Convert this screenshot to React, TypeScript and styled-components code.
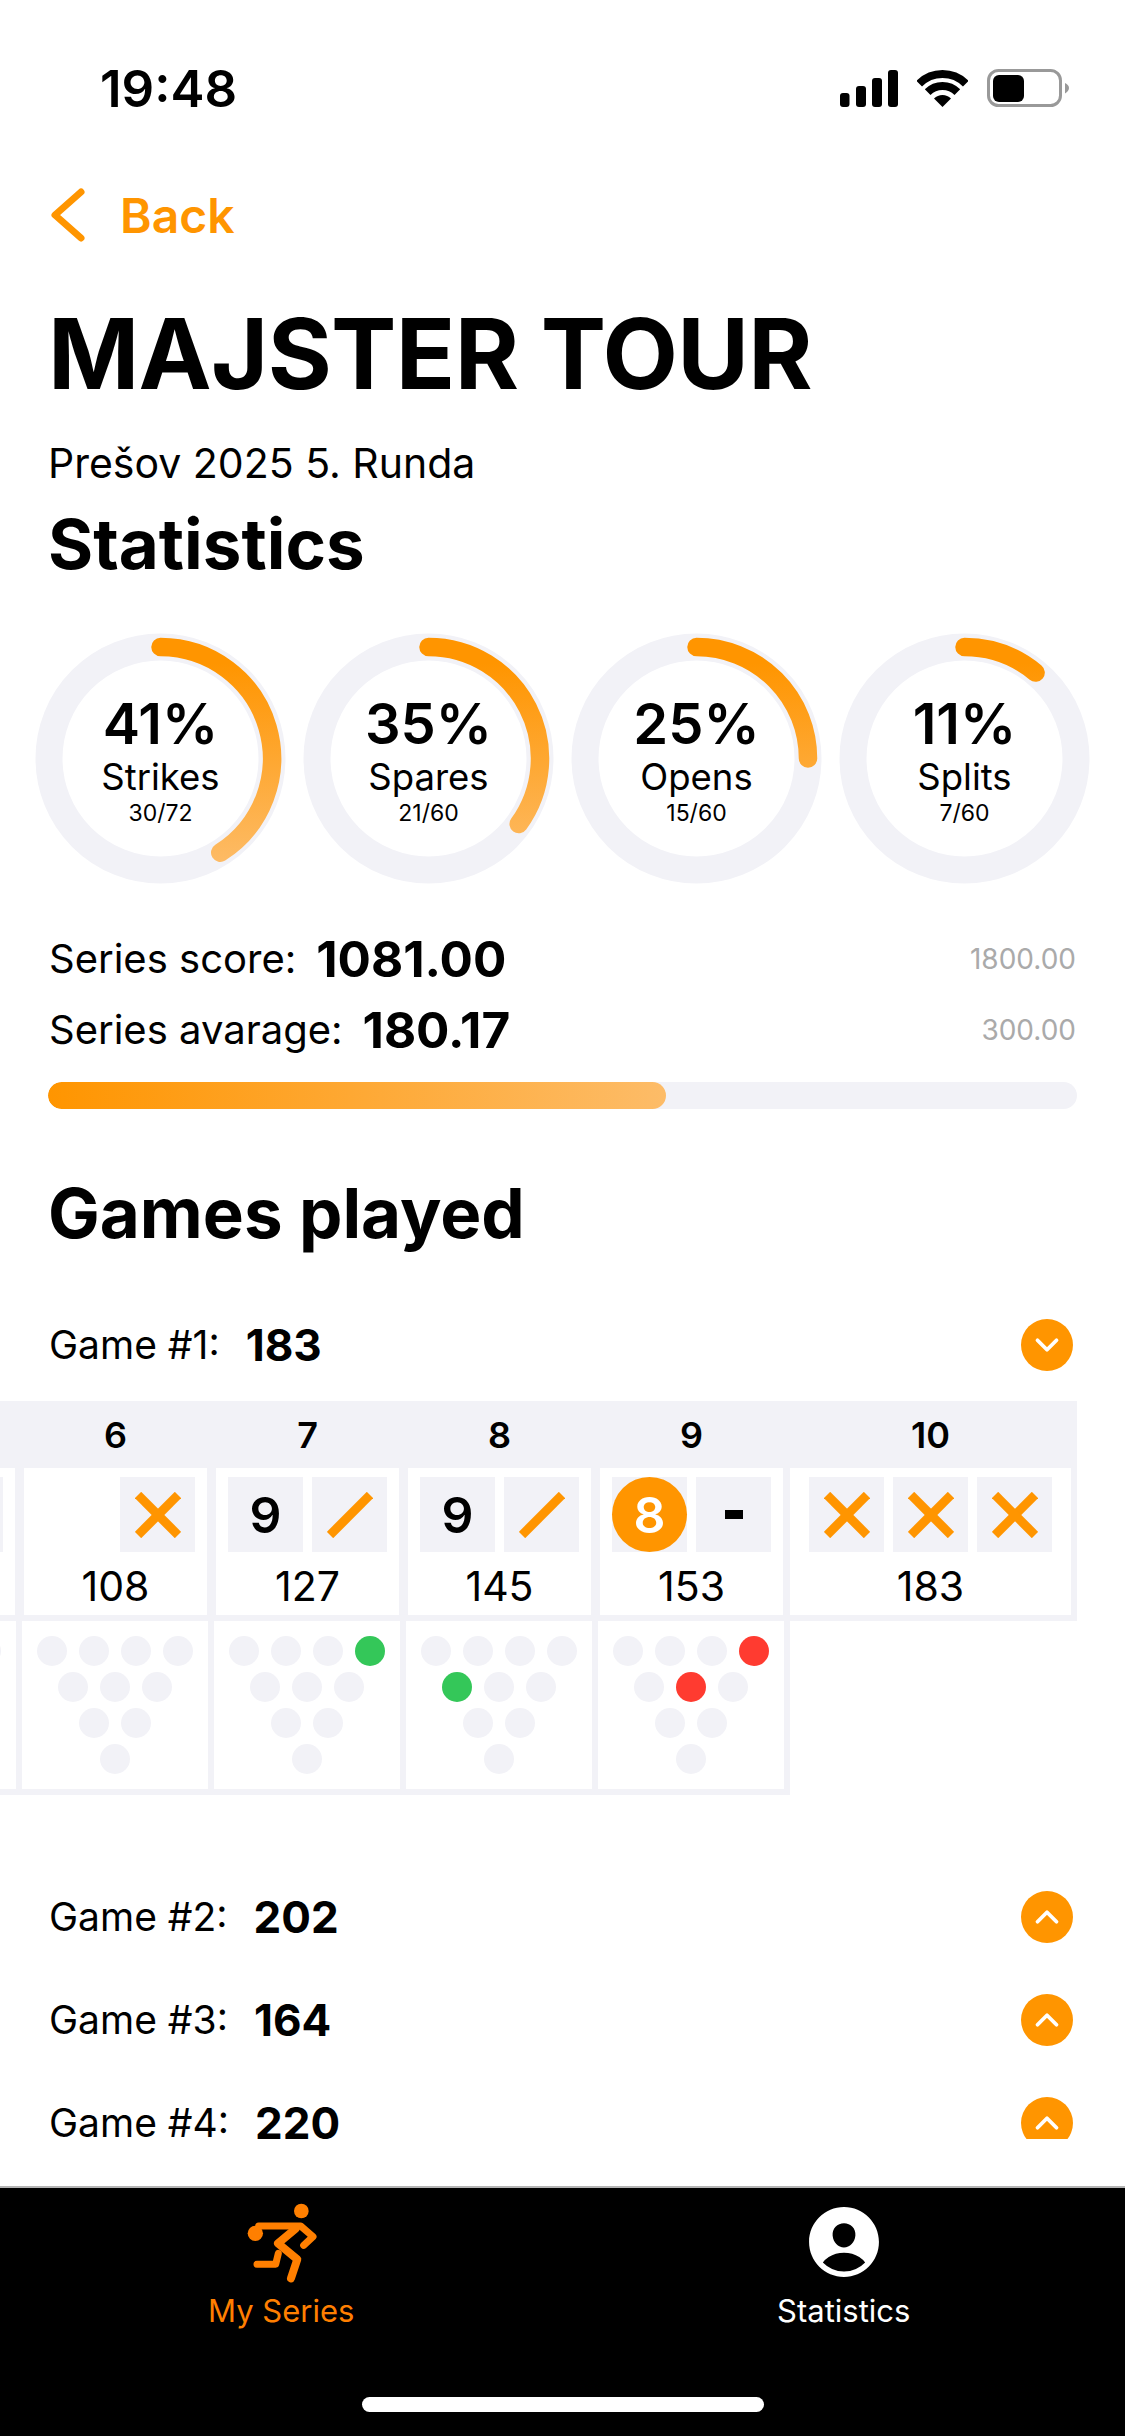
import React from 'react';
import styled, { createGlobalStyle } from 'styled-components';
import { ChevronDown, ChevronUp } from 'lucide-react';
import { IoPersonCircle } from 'react-icons/io5';

const ORANGE = '#FF9500';
const GREY = '#F2F2F7';

type Mark = 'none' | 'x' | 'slash' | 'dash' | 'badge' | number;

type Frame = {
  no: string;
  marks: Mark[];
  score: string;
  wide?: boolean;
  pins?: Record<number, 'green' | 'red'>;
};

// first frame is scrolled almost fully out of view, only its right edge shows
const FRAMES: Frame[] = [
  { no: '', marks: ['none', 'x'], score: '', pins: {} },
  { no: '6', marks: ['none', 'x'], score: '108', pins: {} },
  { no: '7', marks: [9, 'slash'], score: '127', pins: { 3: 'green' } },
  { no: '8', marks: [9, 'slash'], score: '145', pins: { 4: 'green' } },
  { no: '9', marks: ['badge', 'dash'], score: '153', pins: { 3: 'red', 5: 'red' } },
  { no: '10', marks: ['x', 'x', 'x'], score: '183', wide: true },
];

const RINGS = [
  { pct: 41, label: 'Strikes', detail: '30/72' },
  { pct: 35, label: 'Spares', detail: '21/60' },
  { pct: 25, label: 'Opens', detail: '15/60' },
  { pct: 11, label: 'Splits', detail: '7/60' },
];

const PIN_ROWS = [
  [0, 1, 2, 3],
  [4, 5, 6],
  [7, 8],
  [9],
];

const GlobalStyle = createGlobalStyle`
  html, body {
    margin: 0;
    padding: 0;
    background: #fff;
    font-family: Inter, "Liberation Sans", sans-serif;
    color: #000;
  }
  * {
    box-sizing: border-box;
  }
`;

function Ring({ pct, label, detail }: { pct: number; label: string; detail: string }) {
  // arc goes clockwise from 12 o'clock
  const angle = (pct / 100) * Math.PI * 2;
  const r = 111.5;
  const c = 125.5;
  const x = c + r * Math.sin(angle);
  const y = c - r * Math.cos(angle);
  const gradId = `ring-${label}`;

  return (
    <RingWrap>
      <RingSvg viewBox="0 0 251 251">
        <defs>
          <linearGradient id={gradId} gradientUnits="userSpaceOnUse" x1="0" y1="30" x2="0" y2="235">
            <stop offset="0" stopColor="#FF9500" />
            <stop offset="1" stopColor="#FDBC68" />
          </linearGradient>
        </defs>
        <circle cx={c} cy={c} r={r} fill="none" stroke={GREY} strokeWidth="27" />
        <path
          d={`M${c} ${c - r} A${r} ${r} 0 0 1 ${x} ${y}`}
          fill="none"
          stroke={`url(#${gradId})`}
          strokeWidth="18.5"
          strokeLinecap="round"
        />
      </RingSvg>
      <RingText>
        <RingPct>{pct}%</RingPct>
        <RingLabel>{label}</RingLabel>
        <RingDetail>{detail}</RingDetail>
      </RingText>
    </RingWrap>
  );
}

function MarkBox({ mark }: { mark: Mark }) {
  if (mark === 'none') return <Box $blank />;
  if (mark === 'badge') return <Box><Badge>8</Badge></Box>;
  if (mark === 'dash') return <Box><Dash /></Box>;
  if (typeof mark === 'number') return <Box>{mark}</Box>;
  return (
    <Box>
      <svg width="46" height="46" viewBox="0 0 46 46">
        <path d="M43 3 L3 43" stroke={ORANGE} strokeWidth="9" fill="none" />
        {mark === 'x' && <path d="M3 3 L43 43" stroke={ORANGE} strokeWidth="9" fill="none" />}
      </svg>
    </Box>
  );
}

function GameRow({ name, score, open }: { name: string; score: string; open?: boolean }) {
  return (
    <GameHead>
      <GameName>{name}:</GameName>
      <GameScore>{score}</GameScore>
      <Toggle>
        {open
          ? <ChevronDown color="#fff" size={38} strokeWidth={2.4} />
          : <ChevronUp color="#fff" size={38} strokeWidth={2.4} />}
      </Toggle>
    </GameHead>
  );
}

export default function App() {
  return (
    <Screen>
      <GlobalStyle />
      <Content>
        <StatusBar>
          <Time>19:48</Time>
          <StatusIcons>
            <svg width="58" height="37" viewBox="0 0 58 37">
              <rect x="0" y="23" width="9.5" height="14" rx="3" />
              <rect x="16" y="16" width="10" height="21" rx="3" />
              <rect x="32" y="8" width="10" height="29" rx="3" />
              <rect x="48" y="0" width="10" height="37" rx="3" />
            </svg>
            <WifiIcon width="51" height="37" viewBox="0 0 51 37">
              <path d="M2.2 13.7 A33 33 0 0 1 48.8 13.7" fill="none" stroke="#000" strokeWidth="8" />
              <path d="M10.65 22.15 A21 21 0 0 1 40.35 22.15" fill="none" stroke="#000" strokeWidth="8" />
              <path d="M25.5 37 L17 28.5 A12 12 0 0 1 34 28.5 Z" />
            </WifiIcon>
            <BatteryIcon width="82" height="38" viewBox="0 0 82 38">
              <rect x="1.5" y="1.5" width="72" height="35" rx="10" fill="none" stroke="#999" strokeWidth="3" />
              <rect x="6" y="6" width="31" height="27" rx="6" />
              <path d="M78 14 C80.5 15 82 17 82 19 C82 21 80.5 23 78 24.5 Z" fill="#999" />
            </BatteryIcon>
          </StatusIcons>
        </StatusBar>

        <BackRow>
          <svg width="36" height="56" viewBox="0 0 36 56">
            <polyline
              points="31,5 5,28 31,51"
              fill="none"
              stroke={ORANGE}
              strokeWidth="7"
              strokeLinecap="round"
              strokeLinejoin="round"
            />
          </svg>
          <BackLabel>Back</BackLabel>
        </BackRow>

        <Title>MAJSTER TOUR</Title>
        <Subtitle>Prešov 2025 5. Runda</Subtitle>
        <SectionTitle>Statistics</SectionTitle>

        <Rings>
          {RINGS.map((ring) => <Ring key={ring.label} {...ring} />)}
        </Rings>

        <SeriesBlock>
          <SeriesRow>
            <SeriesLabel>Series score:</SeriesLabel>
            <SeriesValue>1081.00</SeriesValue>
            <SeriesMax>1800.00</SeriesMax>
          </SeriesRow>
          <SeriesRow>
            <SeriesLabel>Series avarage:</SeriesLabel>
            <SeriesValue>180.17</SeriesValue>
            <SeriesMax>300.00</SeriesMax>
          </SeriesRow>
        </SeriesBlock>
        <ProgressTrack>
          <ProgressFill style={{ width: `${(1081 / 1800) * 100}%` }} />
        </ProgressTrack>

        <GamesTitle>Games played</GamesTitle>

        <GameList>
          <GameRow name="Game #1" score="183" open />
        </GameList>

        <Board>
          <BoardTrack>
            <FrameRow>
              {FRAMES.map((frame, i) => (
                <FrameCol key={i} $wide={frame.wide}>
                  <FrameNo>{frame.no}</FrameNo>
                  <FrameCell>
                    <Marks $wide={frame.wide}>
                      {frame.marks.map((mark, m) => <MarkBox key={m} mark={mark} />)}
                    </Marks>
                    <FrameScore>{frame.score}</FrameScore>
                  </FrameCell>
                </FrameCol>
              ))}
            </FrameRow>
            <PinRow>
              {FRAMES.filter((frame) => frame.pins).map((frame, i) => (
                <PinCell key={i}>
                  {PIN_ROWS.map((row, r) => (
                    <PinLine key={r}>
                      {row.map((pin) => <Pin key={pin} $state={frame.pins?.[pin]} />)}
                    </PinLine>
                  ))}
                </PinCell>
              ))}
            </PinRow>
          </BoardTrack>
        </Board>

        <GamesRest>
          <GameRow name="Game #2" score="202" />
          <GameRow name="Game #3" score="164" />
          <GameRow name="Game #4" score="220" />
        </GamesRest>
      </Content>

      <TabBar>
        <Tabs>
          <Tab>
            <svg width="75" height="84" viewBox="190 60 225 252">
              <circle cx="362" cy="93" r="22" fill="#FF7F00" />
              <circle cx="224" cy="160" r="23" fill="#FF7F00" />
              <g fill="none" stroke="#FF7F00" strokeWidth="21" strokeLinecap="round" strokeLinejoin="round">
                <path d="M234 138 H360 L397 170 L369 196" />
                <path d="M345 146 L292 190 L350 238 L331 295" strokeWidth="24" />
                <path d="M293 220 L285 253 H229" />
              </g>
            </svg>
            <TabLabel $active>My Series</TabLabel>
          </Tab>
          <Tab>
            <PersonIconWrap>
              <IoPersonCircle size={86} color="#fff" />
            </PersonIconWrap>
            <TabLabel>Statistics</TabLabel>
          </Tab>
        </Tabs>
        <HomeIndicator />
      </TabBar>
    </Screen>
  );
}

const Screen = styled.div`
  width: 1125px;
  height: 2436px;
  display: flex;
  flex-direction: column;
  justify-content: space-between;
  background: #fff;
  overflow: hidden;
`;

const Content = styled.div`
  height: 2139px;
  overflow: hidden;
`;

const StatusBar = styled.div`
  height: 130px;
  padding: 67px 56px 0 100px;
  display: flex;
  justify-content: space-between;
  align-items: flex-start;
`;

const Time = styled.div`
  font-size: 51px;
  line-height: 44px;
  font-weight: 600;
`;

const StatusIcons = styled.div`
  display: flex;
  align-items: flex-start;
  margin-top: 3px;
`;

const WifiIcon = styled.svg`
  margin-left: 19px;
`;

const BatteryIcon = styled.svg`
  margin-left: 19px;
  margin-top: -1px;
`;

const BackRow = styled.div`
  margin-top: 55px;
  height: 60px;
  padding-left: 50px;
  display: flex;
  align-items: center;
  gap: 34px;
`;

const BackLabel = styled.span`
  color: ${ORANGE};
  font-size: 48px;
  font-weight: 600;
`;

const Title = styled.h1`
  margin: 54px 0 0 48px;
  font-size: 98px;
  line-height: 110px;
  font-weight: 700;
  letter-spacing: -0.7px;
  white-space: nowrap;
`;

const Subtitle = styled.div`
  margin: 29px 0 0 48px;
  font-size: 41px;
  line-height: 50px;
`;

const SectionTitle = styled.h2`
  margin: 16px 0 0 48px;
  font-size: 69px;
  line-height: 80px;
  font-weight: 700;
`;

const Rings = styled.div`
  margin-top: 49px;
  display: flex;
  justify-content: center;
  gap: 17px;
`;

const RingWrap = styled.div`
  width: 251px;
  height: 251px;
  display: grid;
  place-items: center;
`;

const RingSvg = styled.svg`
  grid-area: 1 / 1;
  width: 251px;
  height: 251px;
`;

const RingText = styled.div`
  grid-area: 1 / 1;
  margin-top: 2px;
  display: flex;
  flex-direction: column;
  align-items: center;
`;

const RingPct = styled.div`
  font-size: 56px;
  line-height: 60px;
  font-weight: 600;
`;

const RingLabel = styled.div`
  font-size: 36.5px;
  line-height: 46px;
`;

const RingDetail = styled.div`
  font-size: 23px;
  line-height: 24px;
  margin-top: 1px;
`;

const SeriesBlock = styled.div`
  margin-top: 39px;
`;

const SeriesRow = styled.div`
  height: 71px;
  margin: 0 49px;
  display: flex;
  align-items: center;
`;

const SeriesLabel = styled.span`
  font-size: 40px;
  font-weight: 400;
`;

const SeriesValue = styled.span`
  margin-left: 20px;
  font-size: 49.5px;
  font-weight: 700;
`;

const SeriesMax = styled.span`
  margin-left: auto;
  font-size: 28px;
  color: #aaa;
`;

const ProgressTrack = styled.div`
  margin: 17px 48px 0;
  height: 27px;
  border-radius: 14px;
  background: ${GREY};
  overflow: hidden;
`;

const ProgressFill = styled.div`
  height: 100%;
  border-radius: 14px;
  background: linear-gradient(90deg, #ff9500, #fdbc68);
`;

const GamesTitle = styled.h2`
  margin: 64px 0 0 48px;
  font-size: 69px;
  line-height: 80px;
  font-weight: 700;
`;

const GameList = styled.div`
  margin-top: 40px;
`;

const GameHead = styled.div`
  height: 103px;
  padding: 0 52px 0 49px;
  display: flex;
  align-items: center;
`;

const GameName = styled.span`
  font-size: 39px;
  line-height: 32px;
`;

const GameScore = styled.span`
  margin-left: 26px;
  font-size: 44px;
  line-height: 32px;
  font-weight: 700;
`;

const Toggle = styled.div`
  margin-left: auto;
  width: 52px;
  height: 52px;
  flex-shrink: 0;
  border-radius: 50%;
  background: ${ORANGE};
  display: flex;
  align-items: center;
  justify-content: center;
`;

const Board = styled.div`
  margin-top: 5px;
  overflow: hidden;
`;

const BoardTrack = styled.div`
  margin-left: -170px;
  width: fit-content;
`;

const FrameRow = styled.div`
  display: flex;
  gap: 9px;
  padding: 0 6px 6.5px 2px;
  background: ${GREY};
`;

const FrameCol = styled.div<{ $wide?: boolean }>`
  width: ${({ $wide }) => ($wide ? '281px' : '183px')};
  margin-left: ${({ $wide }) => ($wide ? '-2px' : '0')};
`;

const FrameNo = styled.div`
  height: 67px;
  display: flex;
  align-items: center;
  justify-content: center;
  font-size: 36px;
  font-weight: 600;
`;

const FrameCell = styled.div`
  height: 146.5px;
  background: #fff;
  padding-top: 9px;
`;

const Marks = styled.div<{ $wide?: boolean }>`
  display: flex;
  justify-content: ${({ $wide }) => ($wide ? 'center' : 'space-between')};
  gap: 9px;
  padding: 0 12px;
`;

const Box = styled.div<{ $blank?: boolean }>`
  width: 75px;
  height: 75px;
  background: ${({ $blank }) => ($blank ? 'transparent' : GREY)};
  display: flex;
  align-items: center;
  justify-content: center;
  font-size: 50px;
  font-weight: 600;
`;

const Badge = styled.div`
  width: 100%;
  height: 100%;
  border-radius: 50%;
  background: ${ORANGE};
  color: #fff;
  display: flex;
  align-items: center;
  justify-content: center;
`;

const Dash = styled.div`
  width: 18px;
  height: 9px;
  background: #000;
`;

const FrameScore = styled.div`
  height: 62.5px;
  padding-top: 5px;
  display: flex;
  align-items: center;
  justify-content: center;
  font-size: 41px;
`;

const PinRow = styled.div`
  width: fit-content;
  display: flex;
  gap: 6px;
  padding: 0 6px 6px 0;
  background: ${GREY};
`;

const PinCell = styled.div`
  width: 186px;
  height: 168px;
  padding-top: 15px;
  background: #fff;
  display: flex;
  flex-direction: column;
  gap: 6px;
`;

const PinLine = styled.div`
  display: flex;
  justify-content: center;
  gap: 12px;
`;

const PIN_COLOURS = { green: '#34C759', red: '#FF3B30' };

const Pin = styled.div<{ $state?: 'green' | 'red' }>`
  width: 30px;
  height: 30px;
  border-radius: 50%;
  background: ${({ $state }) => ($state ? PIN_COLOURS[$state] : GREY)};
`;

const GamesRest = styled.div`
  margin-top: 70px;
`;

const TabBar = styled.div`
  height: 250px;
  background: #000;
  border-top: 2px solid #b4b4b4;
  display: flex;
  flex-direction: column;
  align-items: center;
`;

const Tabs = styled.div`
  width: 100%;
  display: flex;
`;

const Tab = styled.div`
  flex: 1;
  height: 146px;
  padding-top: 12px;
  display: flex;
  flex-direction: column;
  align-items: center;
`;

const PersonIconWrap = styled.div`
  height: 84px;
  display: flex;
  align-items: center;
  justify-content: center;
`;

const TabLabel = styled.div<{ $active?: boolean }>`
  margin-top: 9px;
  font-size: 31px;
  line-height: 36px;
  font-weight: 400;
  color: ${({ $active }) => ($active ? '#FF7F00' : '#fff')};
`;

const HomeIndicator = styled.div`
  margin-top: 63px;
  width: 402px;
  height: 15px;
  border-radius: 8px;
  background: #fff;
`;
